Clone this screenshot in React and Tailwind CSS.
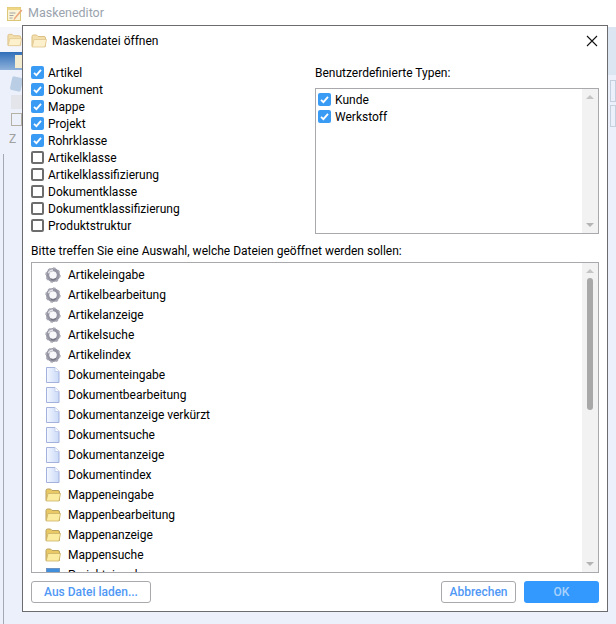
import { useId } from "react";

const font = "font-['Roboto',sans-serif]";

const mainTypes = [
  { label: "Artikel", checked: true },
  { label: "Dokument", checked: true },
  { label: "Mappe", checked: true },
  { label: "Projekt", checked: true },
  { label: "Rohrklasse", checked: true },
  { label: "Artikelklasse", checked: false },
  { label: "Artikelklassifizierung", checked: false },
  { label: "Dokumentklasse", checked: false },
  { label: "Dokumentklassifizierung", checked: false },
  { label: "Produktstruktur", checked: false },
];

const files = [
  { label: "Artikeleingabe", icon: "gear" },
  { label: "Artikelbearbeitung", icon: "gear" },
  { label: "Artikelanzeige", icon: "gear" },
  { label: "Artikelsuche", icon: "gear" },
  { label: "Artikelindex", icon: "gear" },
  { label: "Dokumenteingabe", icon: "doc" },
  { label: "Dokumentbearbeitung", icon: "doc" },
  { label: "Dokumentanzeige verkürzt", icon: "doc" },
  { label: "Dokumentsuche", icon: "doc" },
  { label: "Dokumentanzeige", icon: "doc" },
  { label: "Dokumentindex", icon: "doc" },
  { label: "Mappeneingabe", icon: "folder" },
  { label: "Mappenbearbeitung", icon: "folder" },
  { label: "Mappenanzeige", icon: "folder" },
  { label: "Mappensuche", icon: "folder" },
  { label: "Projekteingabe", icon: "project" },
];

function GearIcon() {
  return (
    <svg width="16" height="16" viewBox="0 0 16 16">
      <circle cx="8" cy="8" r="5.3" fill="none" stroke="#9494a2" strokeWidth="3.4" />
      <circle cx="8" cy="8" r="6.9" fill="none" stroke="#a9a9b5" strokeWidth="1.6" strokeDasharray="2.6 2.8" />
      <circle cx="8" cy="8" r="3.4" fill="#f8f8fa" />
      <path d="M3.4 6.2A5 5 0 0 1 8 3" fill="none" stroke="#e2e2e8" strokeWidth="1.5" />
      <path d="M11 11.4A4.6 4.6 0 0 1 6 12.4" fill="none" stroke="#74747f" strokeWidth="1.2" />
    </svg>
  );
}

function DocIcon() {
  const id = useId();
  return (
    <svg width="16" height="16" viewBox="0 0 16 16">
      <defs>
        <linearGradient id={id} x1="0" y1="0" x2="1" y2="0">
          <stop offset="0" stopColor="#f4f8ff" />
          <stop offset="1" stopColor="#c9d9f7" />
        </linearGradient>
      </defs>
      <path d="M1.5.5H10L14 4.5V15.5H1.5Z" fill={`url(#${id})`} stroke="#a3b2dc" />
      <path d="M10 .5V4.5H14" fill="#fff" stroke="#c3cfec" />
    </svg>
  );
}

function FolderIcon({ pale = false }) {
  return (
    <svg width="16" height="16" viewBox="0 0 16 16">
      <path
        d="M1 3.5Q1 2 2.5 2H5.5L7 3.5H13Q14.5 3.5 14.5 5V13.5H1Z"
        fill={pale ? "#f4dfae" : "#e8c964"}
        stroke={pale ? "#dcbf83" : "#b79f5f"}
      />
      <path
        d="M1.2 14 3 6.5H15.5L14 14Z"
        fill={pale ? "#fdf0cc" : "#fcec9f"}
        stroke={pale ? "#e0c68e" : "#cbb168"}
        strokeWidth="0.8"
      />
    </svg>
  );
}

function ProjectIcon() {
  return (
    <svg width="16" height="16" viewBox="0 0 16 16">
      <rect x="1.5" y="1.5" width="13" height="13" fill="#e8f0fa" stroke="#6f93c0" />
      <rect x="2" y="2" width="12" height="3" fill="#3f8fdc" />
    </svg>
  );
}

const icons = {
  gear: <GearIcon />,
  doc: <DocIcon />,
  folder: <FolderIcon />,
  project: <ProjectIcon />,
};

function Check({ checked }) {
  return checked ? (
    <span className="flex h-[13px] w-[13px] shrink-0 items-center justify-center rounded-[2px] bg-[#3a9bf5]">
      <svg width="11" height="11" viewBox="0 0 11 11">
        <path d="M2 5.8 4.4 8.2 9 2.8" fill="none" stroke="#fff" strokeWidth="1.8" />
      </svg>
    </span>
  ) : (
    <span className="h-[13px] w-[13px] shrink-0 rounded-[2px] border-2 border-[#6d6d6d] bg-white" />
  );
}

function CheckRow({ label, checked }) {
  return (
    <div className="flex h-[17px] items-center gap-1">
      <Check checked={checked} />
      <span>{label}</span>
    </div>
  );
}

function Arrow({ up }) {
  return (
    <span
      className={
        up
          ? "h-0 w-0 border-x-[4px] border-b-[4px] border-x-transparent border-b-[#c4c4c4]"
          : "h-0 w-0 border-x-[4px] border-t-[4px] border-x-transparent border-t-[#b4b4b4]"
      }
    />
  );
}

function Scrollbar({ thumb }) {
  return (
    <div className="flex w-[16px] shrink-0 flex-col items-center justify-between bg-[#f2f2f2] py-[6px]">
      <div className="flex flex-col items-center gap-[5px]">
        <Arrow up />
        {thumb && <div className="h-[132px] w-[6px] rounded-[3px] bg-[#a8a8a8]" />}
      </div>
      <Arrow />
    </div>
  );
}

function Background() {
  return (
    <div className="flex h-[624px] w-[616px] flex-col overflow-hidden bg-[#ecf0fb]">
      <div className="flex h-[27px] shrink-0 items-center gap-[5px] bg-white pl-[7px]">
        <svg width="16" height="16" viewBox="0 0 16 16">
          <rect x="0.5" y="1.5" width="13" height="13" fill="#fbf3d5" stroke="#dcc678" />
          <rect x="0.5" y="1.5" width="13" height="2.5" fill="#efd685" />
          <path d="M2.5 7h6M2.5 9.5h4M2.5 12h3" stroke="#a5a5a5" />
          <path d="M15.5 4.5 8.5 12.5 6.5 15l.6-3L14 3.5Z" fill="#eba77c" />
        </svg>
        <span className="text-[12.5px] text-[#9aa3ad]">Maskeneditor</span>
      </div>
      <div className="flex flex-1 justify-between">
        <div className="flex w-[22px] flex-col">
          <div className="flex h-[25px] shrink-0 items-center bg-[#f5f6fb] pl-[7px]">
            <FolderIcon pale />
          </div>
          <div className="flex h-[18px] shrink-0 items-center justify-end bg-gradient-to-b from-[#2f6fb9] to-[#8fb2da]">
            <div className="h-[13px] w-[7px] bg-[#f3ecd0]" />
          </div>
          <div className="flex flex-col gap-[4px] pl-[11px] pt-[7px] text-[12px] text-[#a0a0a0]">
            <div className="h-[14px] w-[11px] rotate-12 rounded-[2px] bg-[#b9cde4]" />
            <div className="h-[14px] w-[11px] bg-[#e3e5ea]" />
            <div className="h-[13px] w-[11px] border border-[#b5b0a5]" />
            <span className="-ml-[2px] mt-[2px] leading-[14px]">Z</span>
          </div>
          <div className="ml-[3px] mt-[8px] w-px flex-1 bg-[#a5a7b3]" />
        </div>
        <div className="flex w-[8px] flex-col">
          <div className="h-[48px] shrink-0 bg-[#dce6f3]" />
          <div className="ml-[2px] mt-[5px] h-[22px] border border-[#c4d0dd]" />
          <div className="ml-[2px] mt-[3px] h-[22px] border border-[#c4d0dd]" />
        </div>
      </div>
    </div>
  );
}

export default function App() {
  return (
    <div className={`relative h-[624px] w-[616px] overflow-hidden text-[12px] text-black ${font}`}>
      <Background />
      <div className="absolute left-[22px] top-[25px] flex h-[587px] w-[586px] flex-col border border-[#6c6c70] bg-white px-2 pb-2">
        <div className="flex h-[30px] shrink-0 items-center justify-between">
          <div className="flex items-center gap-[5px]">
            <FolderIcon pale />
            <span>Maskendatei öffnen</span>
          </div>
          <svg className="mr-px" width="12" height="12" viewBox="0 0 12 12">
            <path d="M1 1 11 11M11 1 1 11" stroke="#111" strokeWidth="1.1" />
          </svg>
        </div>

        <div className="mt-2 flex h-[170px] shrink-0">
          <div className="w-[284px]">
            {mainTypes.map((t) => (
              <CheckRow key={t.label} label={t.label} checked={t.checked} />
            ))}
          </div>
          <div className="flex w-[284px] flex-col">
            <div className="flex h-[17px] items-center">Benutzerdefinierte Typen:</div>
            <div className="mt-[7px] flex flex-1 border border-[#a9a9ad]">
              <div className="flex-1 pl-[2px] pt-[2px]">
                <CheckRow label="Kunde" checked />
                <CheckRow label="Werkstoff" checked />
              </div>
              <Scrollbar />
            </div>
          </div>
        </div>

        <div className="mt-[7px] flex h-[20px] shrink-0 items-center">
          Bitte treffen Sie eine Auswahl, welche Dateien geöffnet werden sollen:
        </div>

        <div className="mt-px flex h-[311px] shrink-0 border border-[#a9a9ad]">
          <div className="flex-1 overflow-hidden pl-[13px] pt-[2px]">
            {files.map((f) => (
              <div key={f.label} className="flex h-[20px] items-center gap-[7px]">
                {icons[f.icon]}
                <span>{f.label}</span>
              </div>
            ))}
          </div>
          <Scrollbar thumb />
        </div>

        <div className="mt-2 flex h-[22px] shrink-0 justify-between font-medium">
          <button className="w-[120px] rounded-[3px] border border-[#a9a9ad] bg-white text-[#4f98f5]">
            Aus Datei laden...
          </button>
          <div className="flex gap-2">
            <button className="w-[75px] rounded-[3px] border border-[#a9a9ad] bg-white text-[#4f98f5]">
              Abbrechen
            </button>
            <button className="w-[75px] rounded-[3px] bg-[#3399ff] text-[#a9d2fb]">OK</button>
          </div>
        </div>
      </div>
    </div>
  );
}
